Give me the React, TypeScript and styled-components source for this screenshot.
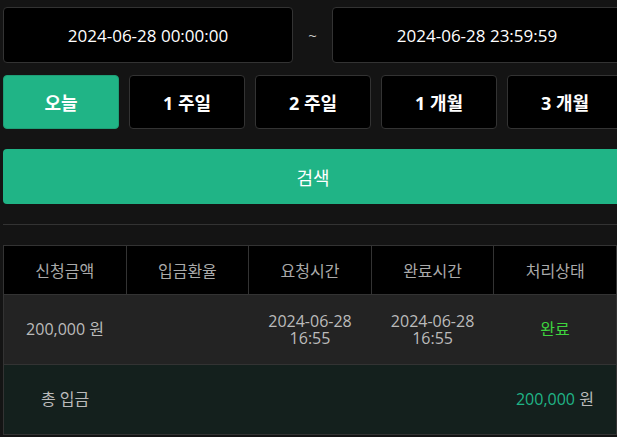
import React from "react";
import styled, { createGlobalStyle } from "styled-components";

const GlobalStyle = createGlobalStyle`
  html, body {
    margin: 0;
    padding: 0;
    background: #141414;
    overflow: hidden;
  }
  body {
    font-family: "Open Sans", "Noto Sans CJK KR", sans-serif;
  }
`;

const Page = styled.div`
  padding: 7px 0 0 3px;
  width: 614px;
`;

const DateRow = styled.div`
  display: flex;
  align-items: center;
  width: 622px;
`;

const DateBox = styled.div`
  flex: 0 0 290px;
  height: 56px;
  box-sizing: border-box;
  display: flex;
  align-items: center;
  justify-content: center;
  background: #000;
  border: 1px solid #333;
  border-radius: 4px;
  color: #fff;
  font-size: 17px;
`;

const Tilde = styled.span`
  flex: 0 0 39px;
  text-align: center;
  color: #ccc;
  font-size: 15px;
`;

const PeriodRow = styled.div`
  display: grid;
  grid-template-columns: repeat(5, 116px);
  gap: 10px;
  margin-top: 12px;
  width: 620px;
`;

const PeriodButton = styled.button<{ active?: boolean }>`
  height: 54px;
  box-sizing: border-box;
  border: 1px solid ${({ active }) => (active ? "#1e9e76" : "#333")};
  border-radius: 4px;
  background: ${({ active }) => (active ? "#20b486" : "#000")};
  color: #fff;
  font-family: "Open Sans", "Noto Sans CJK KR", sans-serif;
  font-size: 18px;
  font-weight: 700;
  padding: 0;
`;

const SearchButton = styled.button`
  display: block;
  width: 620px;
  height: 55px;
  margin-top: 20px;
  border: none;
  border-radius: 4px;
  background: #20b486;
  color: #fff;
  font-family: "Open Sans", "Noto Sans CJK KR", sans-serif;
  font-size: 18px;
  padding: 0;
`;

const Divider = styled.hr`
  margin: 20px 0 0;
  border: none;
  border-top: 1px solid #333;
  width: 620px;
`;

const Table = styled.table`
  margin-top: 20px;
  width: 614px;
  border-collapse: collapse;
  table-layout: fixed;
  border: 1px solid #333;
  font-size: 16px;
`;

const HeadCell = styled.th`
  height: 48px;
  background: #000;
  color: #aaa;
  font-weight: 400;
  border: 1px solid #333;
  padding: 0;
`;

const Row = styled.tr<{ total?: boolean }>`
  background: ${({ total }) => (total ? "#14201d" : "#232323")};
`;

const Cell = styled.td<{ tone?: "done" | "sum" }>`
  height: 69px;
  padding: 0;
  text-align: center;
  border-top: 1px solid #333;
  border-bottom: 1px solid #333;
  color: ${({ tone }) =>
    tone === "done" ? "#3ed33e" : tone === "sum" ? "#20b486" : "#bbb"};
  line-height: 17px;
`;

const Line = styled.span`
  display: block;
`;

const Unit = styled.span`
  color: #bbb;
`;

const periods = ["오늘", "1 주일", "2 주일", "1 개월", "3 개월"];
const headers = ["신청금액", "입금환율", "요청시간", "완료시간", "처리상태"];

export default function App() {
  return (
    <>
      <GlobalStyle />
      <Page>
        <DateRow>
          <DateBox>2024-06-28 00:00:00</DateBox>
          <Tilde>~</Tilde>
          <DateBox>2024-06-28 23:59:59</DateBox>
        </DateRow>
        <PeriodRow>
          {periods.map((p, i) => (
            <PeriodButton key={p} active={i === 0}>
              {p}
            </PeriodButton>
          ))}
        </PeriodRow>
        <SearchButton>검색</SearchButton>
        <Divider />
        <Table>
          <thead>
            <tr>
              {headers.map((h) => (
                <HeadCell key={h}>{h}</HeadCell>
              ))}
            </tr>
          </thead>
          <tbody>
            <Row>
              <Cell>200,000 원</Cell>
              <Cell />
              <Cell>
                <Line>2024-06-28</Line>
                <Line>16:55</Line>
              </Cell>
              <Cell>
                <Line>2024-06-28</Line>
                <Line>16:55</Line>
              </Cell>
              <Cell tone="done">완료</Cell>
            </Row>
            <Row total>
              <Cell>총 입금</Cell>
              <Cell />
              <Cell />
              <Cell />
              <Cell tone="sum">
                200,000 <Unit>원</Unit>
              </Cell>
            </Row>
          </tbody>
        </Table>
      </Page>
    </>
  );
}
